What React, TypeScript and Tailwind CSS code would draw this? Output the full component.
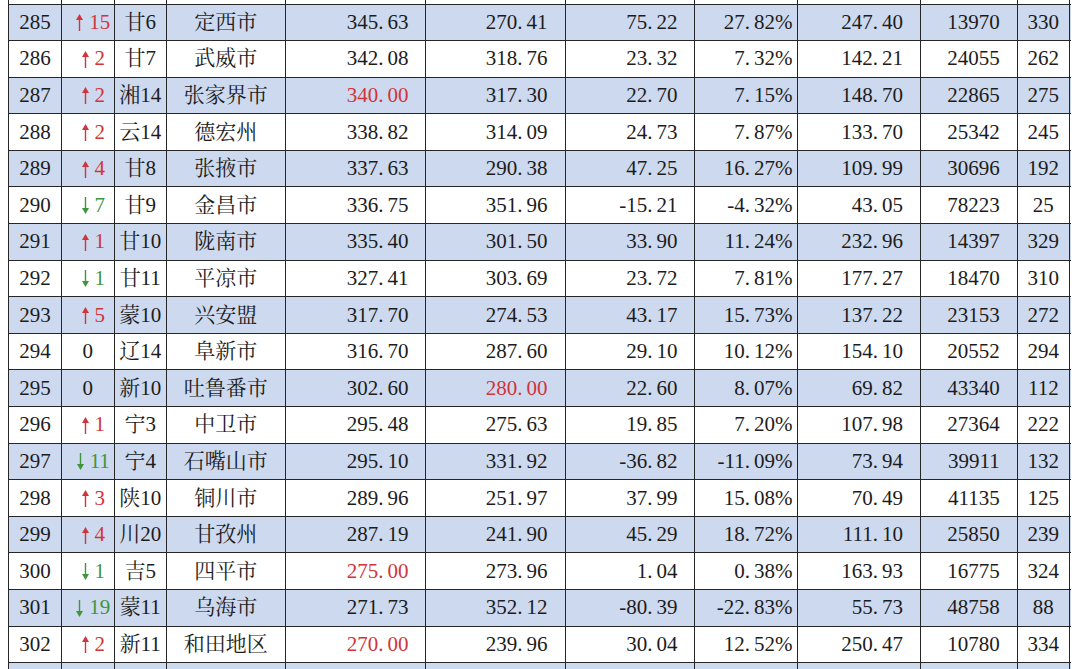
import React from "react";

type Row = {
  rank: number;
  dir: "up" | "down" | "none";
  chg: number;
  prov: string;
  city: string;
  a: string;
  b: string;
  c: string;
  d: string;
  e: string;
  f: string;
  g: string;
  redA?: boolean;
  redB?: boolean;
};

const rows: Row[] = [
  { rank: 285, dir: "up", chg: 15, prov: "甘6", city: "定西市", a: "345.63", b: "270.41", c: "75.22", d: "27.82%", e: "247.40", f: "13970", g: "330" },
  { rank: 286, dir: "up", chg: 2, prov: "甘7", city: "武威市", a: "342.08", b: "318.76", c: "23.32", d: "7.32%", e: "142.21", f: "24055", g: "262" },
  { rank: 287, dir: "up", chg: 2, prov: "湘14", city: "张家界市", a: "340.00", b: "317.30", c: "22.70", d: "7.15%", e: "148.70", f: "22865", g: "275", redA: true },
  { rank: 288, dir: "up", chg: 2, prov: "云14", city: "德宏州", a: "338.82", b: "314.09", c: "24.73", d: "7.87%", e: "133.70", f: "25342", g: "245" },
  { rank: 289, dir: "up", chg: 4, prov: "甘8", city: "张掖市", a: "337.63", b: "290.38", c: "47.25", d: "16.27%", e: "109.99", f: "30696", g: "192" },
  { rank: 290, dir: "down", chg: 7, prov: "甘9", city: "金昌市", a: "336.75", b: "351.96", c: "-15.21", d: "-4.32%", e: "43.05", f: "78223", g: "25" },
  { rank: 291, dir: "up", chg: 1, prov: "甘10", city: "陇南市", a: "335.40", b: "301.50", c: "33.90", d: "11.24%", e: "232.96", f: "14397", g: "329" },
  { rank: 292, dir: "down", chg: 1, prov: "甘11", city: "平凉市", a: "327.41", b: "303.69", c: "23.72", d: "7.81%", e: "177.27", f: "18470", g: "310" },
  { rank: 293, dir: "up", chg: 5, prov: "蒙10", city: "兴安盟", a: "317.70", b: "274.53", c: "43.17", d: "15.73%", e: "137.22", f: "23153", g: "272" },
  { rank: 294, dir: "none", chg: 0, prov: "辽14", city: "阜新市", a: "316.70", b: "287.60", c: "29.10", d: "10.12%", e: "154.10", f: "20552", g: "294" },
  { rank: 295, dir: "none", chg: 0, prov: "新10", city: "吐鲁番市", a: "302.60", b: "280.00", c: "22.60", d: "8.07%", e: "69.82", f: "43340", g: "112", redB: true },
  { rank: 296, dir: "up", chg: 1, prov: "宁3", city: "中卫市", a: "295.48", b: "275.63", c: "19.85", d: "7.20%", e: "107.98", f: "27364", g: "222" },
  { rank: 297, dir: "down", chg: 11, prov: "宁4", city: "石嘴山市", a: "295.10", b: "331.92", c: "-36.82", d: "-11.09%", e: "73.94", f: "39911", g: "132" },
  { rank: 298, dir: "up", chg: 3, prov: "陕10", city: "铜川市", a: "289.96", b: "251.97", c: "37.99", d: "15.08%", e: "70.49", f: "41135", g: "125" },
  { rank: 299, dir: "up", chg: 4, prov: "川20", city: "甘孜州", a: "287.19", b: "241.90", c: "45.29", d: "18.72%", e: "111.10", f: "25850", g: "239" },
  { rank: 300, dir: "down", chg: 1, prov: "吉5", city: "四平市", a: "275.00", b: "273.96", c: "1.04", d: "0.38%", e: "163.93", f: "16775", g: "324", redA: true },
  { rank: 301, dir: "down", chg: 19, prov: "蒙11", city: "乌海市", a: "271.73", b: "352.12", c: "-80.39", d: "-22.83%", e: "55.73", f: "48758", g: "88" },
  { rank: 302, dir: "up", chg: 2, prov: "新11", city: "和田地区", a: "270.00", b: "239.96", c: "30.04", d: "12.52%", e: "250.47", f: "10780", g: "334", redA: true },
];

const grid =
  "grid grid-cols-[53px_52.5px_52.5px_118.5px_140px_140px_129px_103px_123.5px_96.7px_52.3px]";
const cell = "border-r-[1.5px] border-[#262626] flex items-center overflow-hidden whitespace-nowrap";

function Num({ v }: { v: string }) {
  const i = v.indexOf(".");
  if (i < 0) return <span>{v}</span>;
  return (
    <span>
      {v.slice(0, i)}
      <span className="mr-[4px]">.</span>
      {v.slice(i + 1)}
    </span>
  );
}

function Arrow({ dir }: { dir: "up" | "down" }) {
  return (
    <svg width="7" height="17" viewBox="0 0 7 17" className="mr-[6px] mt-[1px]">
      {dir === "up" ? (
        <>
          <path d="M3.5 0 L7 6 L0 6 Z" fill="currentColor" />
          <rect x="2.8" y="4" width="1.4" height="13" fill="currentColor" />
        </>
      ) : (
        <>
          <path d="M3.5 17 L7 11 L0 11 Z" fill="currentColor" />
          <rect x="2.8" y="0" width="1.4" height="13" fill="currentColor" />
        </>
      )}
    </svg>
  );
}

function EmptyRow({ blue, h }: { blue: boolean; h: string }) {
  return (
    <div className={`${grid} ${h} ${blue ? "bg-[#cdd9ee]" : "bg-white"} border-b-[1.5px] border-[#262626] border-l-[1.5px]`}>
      {Array.from({ length: 11 }).map((_, i) => (
        <div key={i} className={cell} />
      ))}
    </div>
  );
}

export default function App() {
  return (
    <div
      className="w-[1080px] h-[669px] overflow-hidden bg-white pl-[8px] text-[21px] text-[#1c1c1c]"
      style={{ fontFamily: '"Liberation Serif", "Noto Serif CJK SC", "Noto Sans CJK SC", serif' }}
    >
      <div className="w-[1063px]">
        <EmptyRow blue={false} h="h-[4.5px]" />
        {rows.map((r) => {
          const blue = r.rank % 2 === 1;
          const red = "text-[#d1343a]";
          const green = "text-[#3c963c]";
          return (
            <div
              key={r.rank}
              className={`${grid} h-[36.6px] ${blue ? "bg-[#cdd9ee]" : "bg-white"} border-b-[1.5px] border-l-[1.5px] border-[#262626] leading-none`}
            >
              <div className={`${cell} justify-center`}>{r.rank}</div>
              <div
                className={`${cell} justify-center ${r.dir === "none" ? "" : "pl-[11px]"} ${
                  r.dir === "up" ? red : r.dir === "down" ? green : ""
                }`}
              >
                {r.dir !== "none" && <Arrow dir={r.dir} />}
                <span>{r.chg}</span>
              </div>
              <div className={`${cell} justify-center`}>{r.prov}</div>
              <div className={`${cell} justify-center`}>{r.city}</div>
              <div className={`${cell} justify-end pr-[16px] ${r.redA ? red : ""}`}>
                <Num v={r.a} />
              </div>
              <div className={`${cell} justify-end pr-[17px] ${r.redB ? red : ""}`}>
                <Num v={r.b} />
              </div>
              <div className={`${cell} justify-end pr-[16px]`}>
                <Num v={r.c} />
              </div>
              <div className={`${cell} justify-end pr-[4px]`}>
                <Num v={r.d} />
              </div>
              <div className={`${cell} justify-end pr-[17px]`}>
                <Num v={r.e} />
              </div>
              <div className={`${cell} justify-end pr-[17px]`}>{r.f}</div>
              <div className={`${cell} justify-center`}>{r.g}</div>
            </div>
          );
        })}
        <EmptyRow blue={true} h="h-[36.6px]" />
      </div>
    </div>
  );
}
